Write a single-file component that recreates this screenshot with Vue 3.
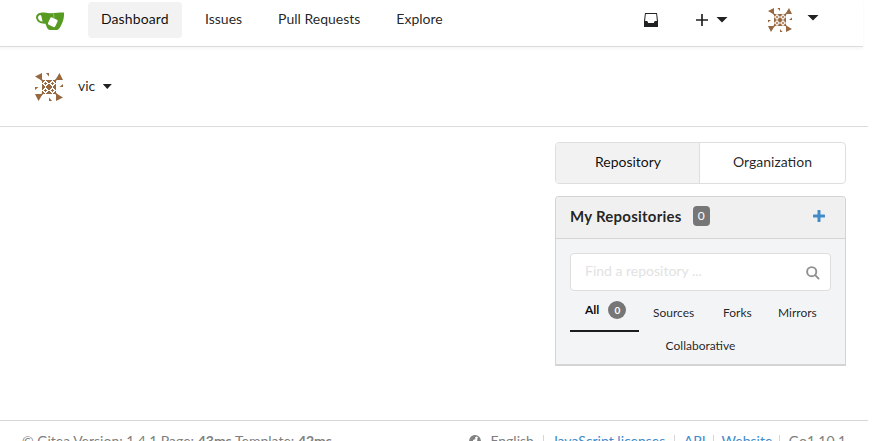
<script setup>
import { h } from 'vue'

const nav = ['Dashboard', 'Issues', 'Pull Requests', 'Explore']
const filters = ['Sources', 'Forks', 'Mirrors', 'Collaborative']

const cell = ['1110111', '1100011', '1001001', '0011100', '1001001', '1100011', '1110111']
const cellPath = cell
  .flatMap((row, y) => [...row].map((bit, x) => (bit === '1' ? `M${x} ${y}h1v1h-1Z` : '')))
  .join('')

const Identicon = () =>
  h('svg', { viewBox: '0 0 28 28', fill: '#97673f' }, [
    ...[0, 90, 180, 270].map((a) =>
      h('g', { transform: `rotate(${a} 14 14)` }, [
        h('path', { d: 'M0 3.500 7 0V6L9 8.500 8 9 5 6.500Z' }),
        h('path', { d: 'M11 0h3v3.500Z' }),
      ]),
    ),
    ...[7, 14].flatMap((x) =>
      [7, 14].map((y) => h('path', { transform: `translate(${x} ${y})`, d: cellPath })),
    ),
  ])
</script>

<template>
  <div class="page">
    <header class="navbar">
      <svg class="logo" viewBox="0 0 28 18">
        <path fill="#589b22" fill-rule="evenodd" d="M5 .7C8 .2 10 1.200 14 1.200 19 1.300 24 .4 28 .5 28.200 5 27.500 9 25.500 12.500 24.200 15.500 22.800 17.800 21 18H13.500C11.300 17.300 10.500 14.500 9.500 11.700 4 12 .5 9.500 0 5.500 0 2.800 1.700 1 5 .7ZM4.700 3C2.900 3 1.900 4.200 2.100 6 2.500 8.200 4.200 9.700 6.700 9.600 5.700 7.500 6.100 5 4.700 3Z" />
        <rect x="12.800" y="6.200" width="8" height="8" rx="1.300" fill="#fff" transform="rotate(25 16.800 10.200)" />
        <path d="M17.500 1.200 18 6" stroke="#a4cb82" stroke-width=".8" />
      </svg>
      <nav>
        <a v-for="(item, i) in nav" :key="item" :class="{ active: i === 0 }">{{ item }}</a>
      </nav>
      <svg class="inbox" viewBox="0 0 14 14">
        <path fill="#202122" fill-rule="evenodd" d="M1 0H13L14 8V14H0V8ZM1.800 1 1.100 8H3.300L4.200 10H9.800L10.700 8H12.900L12.200 1Z" />
      </svg>
      <svg class="add" viewBox="0 0 12 12"><path d="M6 0V12M0 6H12" stroke="#202122" stroke-width="1.700" /></svg>
      <i class="caret create-caret"></i>
      <Identicon class="user-avatar" />
      <i class="caret user-caret"></i>
    </header>

    <section class="context">
      <Identicon class="avatar" />
      <span>vic</span>
      <i class="caret"></i>
    </section>

    <main>
      <aside>
        <div class="tabs"><a class="active">Repository</a><a>Organization</a></div>
        <div class="card">
          <h4>
            My Repositories <span class="count">0</span>
            <svg class="new" viewBox="0 0 12 12"><path d="M6 1V11M1 6H11" stroke="#428bca" stroke-width="3" stroke-linecap="round" /></svg>
          </h4>
          <div class="body">
            <div class="search">
              <span>Find a repository ...</span>
              <svg viewBox="0 0 14 14" fill="none" stroke="#909091" stroke-width="1.900"><circle cx="5.700" cy="5.700" r="4.600" /><path d="M9.200 9.200 12.600 12.600" stroke-linecap="round" /></svg>
            </div>
            <div class="filters">
              <a class="all">All <span>0</span></a>
              <a v-for="f in filters" :key="f" :class="f.toLowerCase()">{{ f }}</a>
            </div>
          </div>
        </div>
      </aside>
    </main>

    <footer>
      <span class="version">© Gitea Version: 1.4.1 Page: <b>43ms</b> Template: <b>42ms</b></span>
      <div class="links">
        <span class="language">
          <svg viewBox="0 0 12 12"><circle cx="6" cy="6" r="5.300" fill="none" stroke="#808080" stroke-width="1.200" /><path fill="#808080" d="M1 5 2 2 5 .5 8 1 6 2.500 6.500 4 4 5 4 7 6 9 4 11 1 8ZM8.500 3 10 2 11.500 6 10 9 8 7Z" /></svg>
          English
        </span>
        <a>JavaScript licenses</a><a>API</a><a>Website</a><span class="go">Go1.10.1</span>
      </div>
    </footer>
  </div>
</template>

<style>
body { background: #fff; overflow: hidden; }
</style>

<style scoped>
* { box-sizing: border-box; }
.page { height: 441px; overflow: hidden; font: 14px/20px Lato, sans-serif; color: rgba(0, 0, 0, .87); display: flex; flex-direction: column; }
svg { display: block; flex: none; }
.navbar { width: 863px; height: 47px; flex: none; display: flex; align-items: center; padding: 0 0 7px 36px; border-bottom: 1px solid #dbdbdc; box-shadow: 0 2px 3px rgba(0, 0, 0, .04); }
.logo { width: 28px; height: 18px; margin-top: 2px; }
nav { display: flex; gap: 10px; margin-left: 24px; flex: 1; }
nav a { height: 36px; padding: 7px 13px 9px; border-radius: 4px; white-space: nowrap; }
nav a.active { width: 94px; background: #f2f2f2; color: rgba(0, 0, 0, .95); letter-spacing: .1px; }
.inbox { width: 14px; height: 14px; margin-right: 38px; }
.add { width: 12px; height: 12px; margin-right: 8px; }
.caret { width: 12px; height: 6px; flex: none; background: #202122; clip-path: polygon(0 0, 100% 0, 50% 100%); }
.create-caret { margin-right: 40px; }
.user-avatar { width: 24px; height: 24px; margin-right: 15px; }
.user-caret { margin: 0 44px 4px 0; }
.context { width: 868px; height: 80px; flex: none; display: flex; align-items: center; padding-left: 35px; border-bottom: 1px solid #dbdbdc; }
.avatar { width: 28px; height: 28px; margin: 1px 15px 0 0; }
.context span { margin-top: -1px; }
.context .caret { width: 9px; height: 5px; margin-left: 7.500px; }
main { height: 293px; flex: none; padding: 15px 27px 0 0; display: flex; justify-content: flex-end; }
aside { width: 291px; }
.tabs { height: 42px; display: flex; border: 1px solid #dededf; border-radius: 4px; overflow: hidden; margin-bottom: 12px; }
.tabs a { flex: 1; text-align: center; line-height: 38px; }
.tabs .active { flex: 0 0 144px; padding-left: 1px; background: #f2f2f2; border-right: 1px solid #dededf; color: rgba(0, 0, 0, .95); }
.card { height: 170px; border: 1px solid #d4d4d5; border-bottom-width: 2px; border-radius: 4px 4px 0 0; background: #f3f4f6; }
h4 { margin: 0; height: 42px; border-bottom: 1px solid #d4d4d5; border-radius: 3px 3px 0 0; background: #f0f0f0; padding: 0 20px 3px 14px; display: flex; align-items: center; font-size: 15px; letter-spacing: .24px; font-weight: 700; }
.count { width: 17px; height: 20px; margin-left: 11px; border-radius: 4px; background: #767676; color: #fff; font-size: 12px; font-weight: 400; letter-spacing: 0; text-align: center; }
.new { width: 12px; height: 12px; margin-left: auto; }
.body { padding: 14px; }
.search { height: 38px; border: 1px solid #dededf; border-radius: 4px; background: #fff; padding: 0 10px 2px 14px; display: flex; align-items: center; justify-content: space-between; color: #e2e2e2; }
.search svg { width: 14px; height: 14px; margin-top: 3px; }
.filters { display: flex; flex-wrap: wrap; font-size: 12px; line-height: 14px; }
.filters a { padding-top: 15px; height: 41px; }
.filters .all { width: 69px; height: 41px; padding: 10px 0 0 15px; display: flex; align-items: flex-start; line-height: 18px; font-weight: 700; color: rgba(0, 0, 0, .95); border-bottom: 2px solid #1b1c1d; }
.all span { width: 18px; height: 18px; margin-left: 9px; border-radius: 50%; background: #767676; color: #fff; font-size: 10px; text-align: center; }
.sources { width: 70px; padding-left: 14px; }
.forks { width: 55px; padding-left: 14px; }
.mirrors { width: 66px; padding-left: 14px; }
.filters .collaborative { width: 100%; text-align: center; padding-top: 7px; height: 30px; }
footer { width: 868px; height: 40px; flex: none; border-top: 1px solid #d6d6d6; padding: 10px 22px 0; display: flex; justify-content: space-between; color: #808080; white-space: nowrap; }
.links { display: flex; }
.links > * { height: 20px; padding-left: 9px; margin-left: 8px; background: linear-gradient(#d6d6d6, #d6d6d6) 0 4px / 1px 12px no-repeat; }
.links a { color: #428bca; }
.links a:first-of-type { margin-left: 9px; }
.links a:nth-of-type(2) { margin-left: 8.500px; padding-left: 10px; }
.links a:nth-of-type(3) { margin-left: 7px; }
.links .go { margin-left: 7px; padding-left: 9.500px; }
.links .language { background: none; display: flex; gap: 9px; }
.language svg { width: 12px; height: 12px; margin-top: 4px; }
</style>
